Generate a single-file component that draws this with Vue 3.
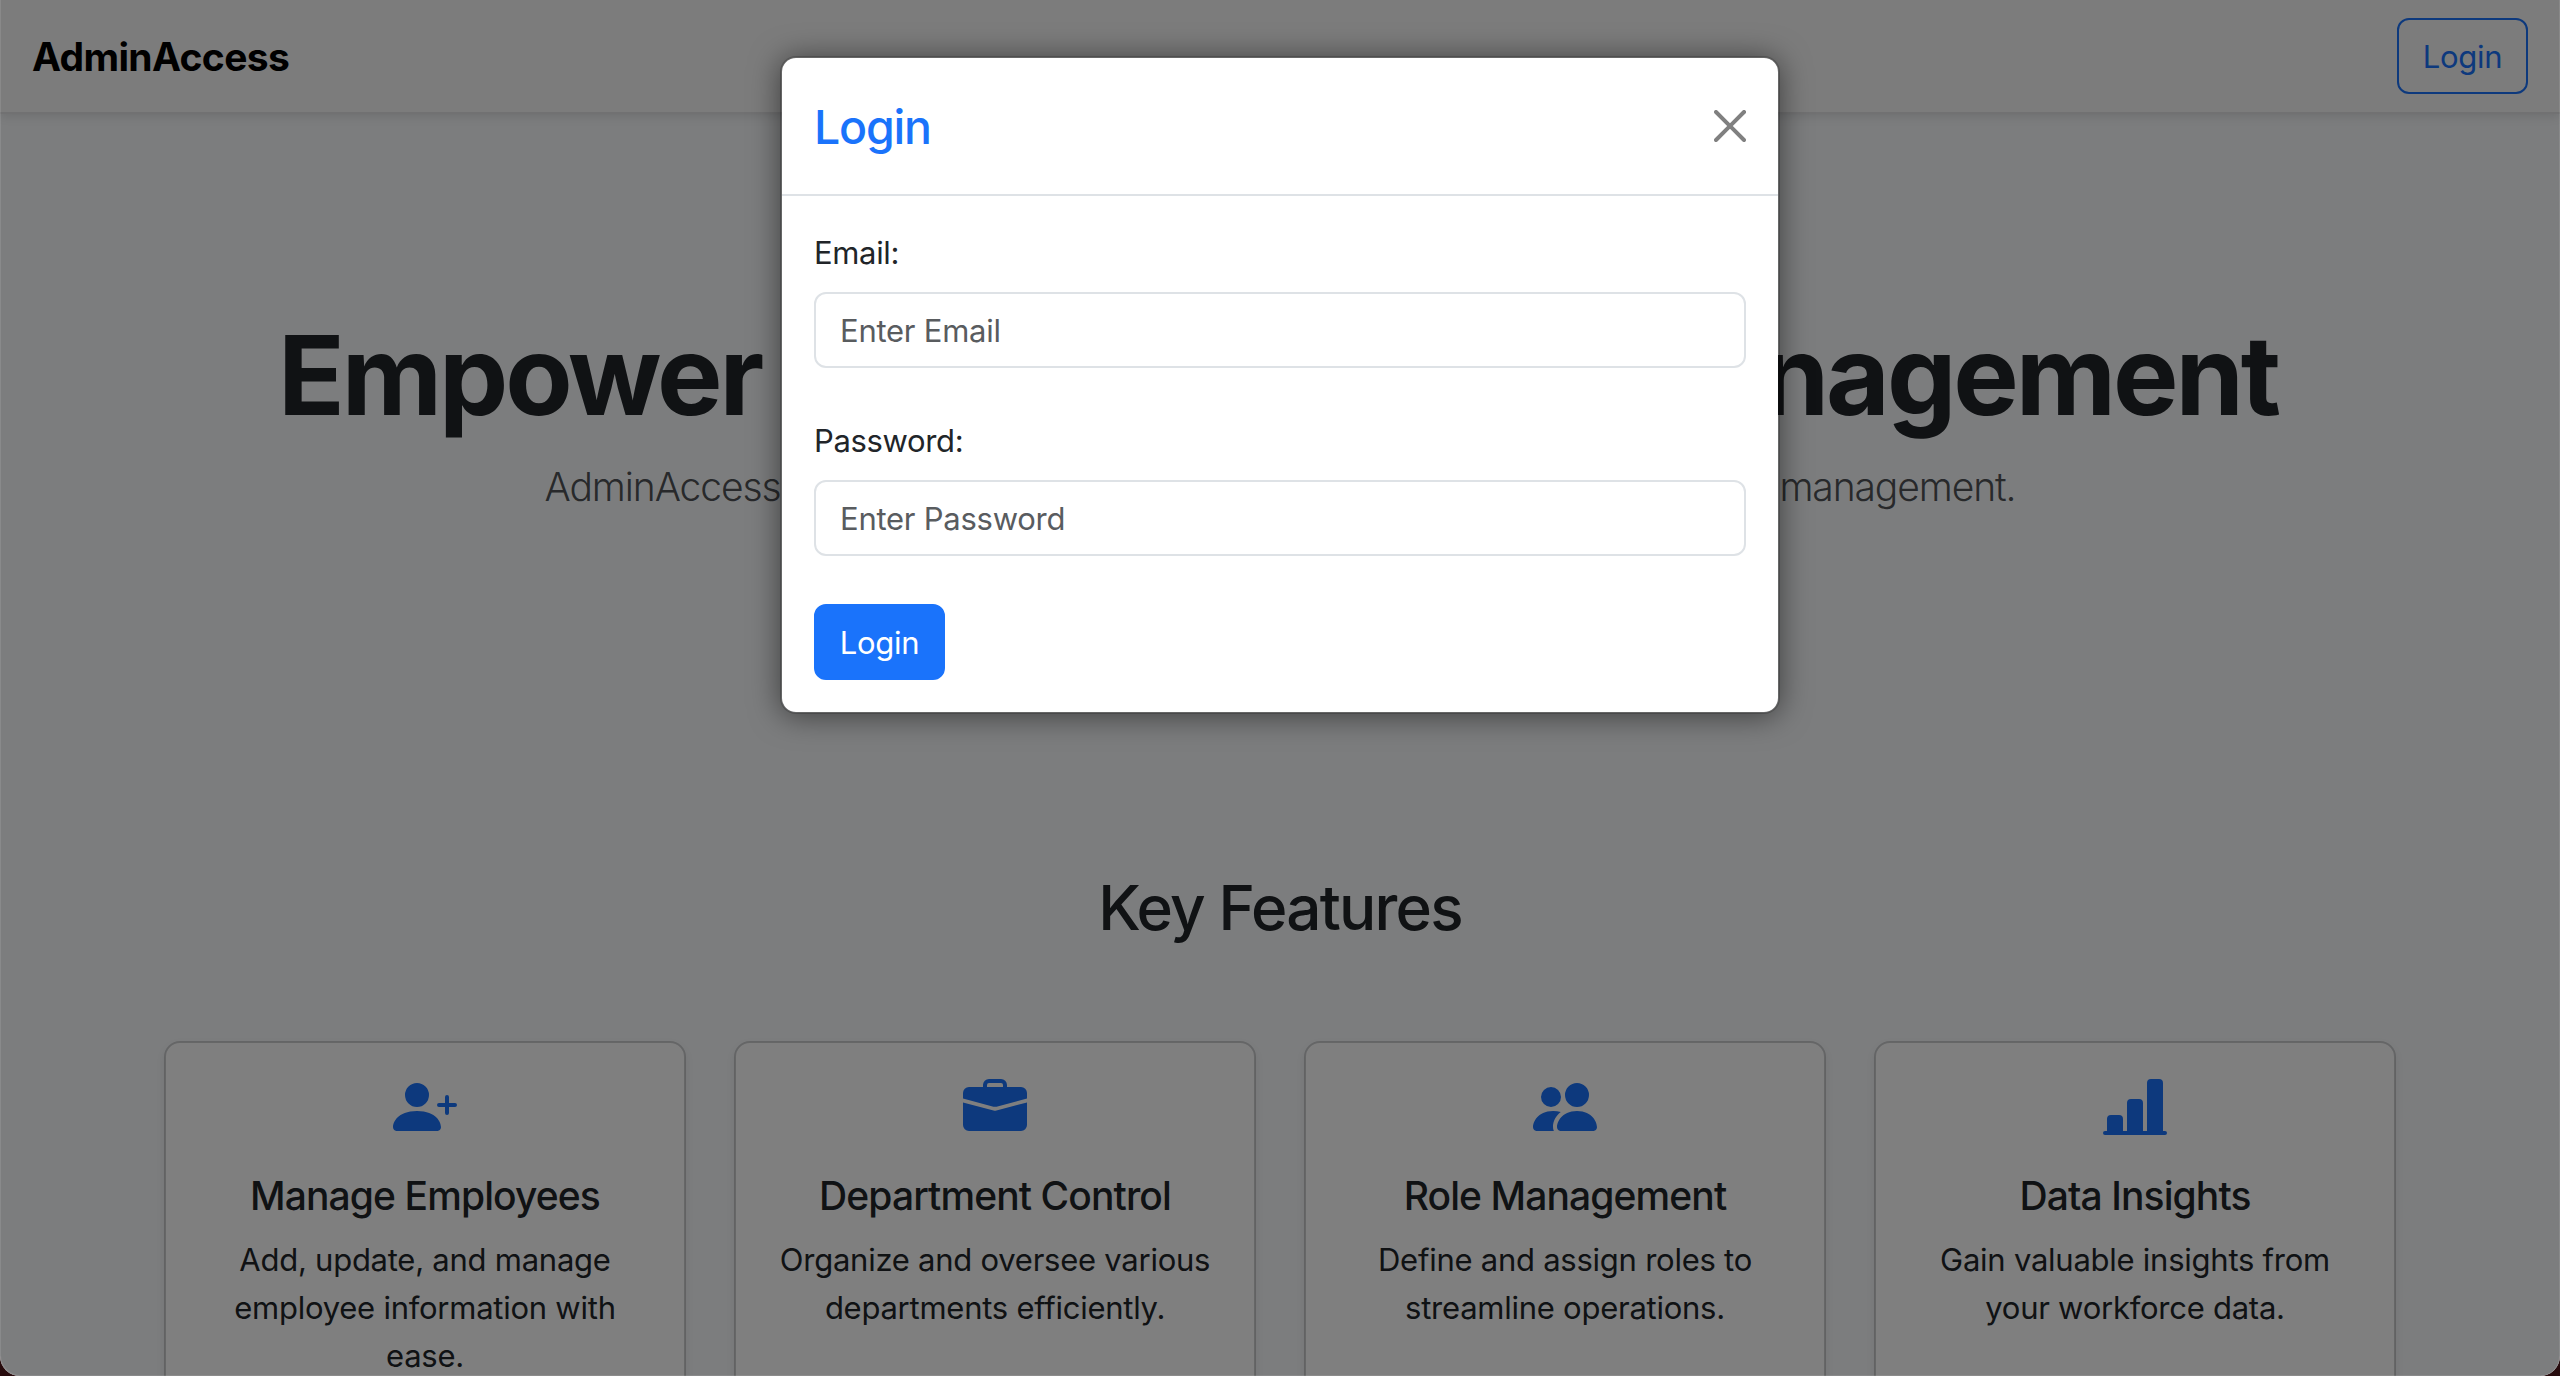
<script setup>
const features = [
  {
    title: 'Manage Employees',
    lines: ['Add, update, and manage', 'employee information with', 'ease.'],
    icon: [
      'M1 14s-1 0-1-1 1-4 6-4 6 3 6 4-1 1-1 1zm5-6a3 3 0 1 0 0-6 3 3 0 0 0 0 6',
      'M13.5 5a.5.5 0 0 1 .5.5V7h1.5a.5.5 0 0 1 0 1H14v1.5a.5.5 0 0 1-1 0V8h-1.5a.5.5 0 0 1 0-1H13V5.5a.5.5 0 0 1 .5-.5',
    ],
  },
  {
    title: 'Department Control',
    lines: ['Organize and oversee various', 'departments efficiently.'],
    icon: [
      'M6.5 1A1.5 1.5 0 0 0 5 2.5V3H1.5A1.5 1.5 0 0 0 0 4.5v1.384l7.614 2.03a1.5 1.5 0 0 0 .772 0L16 5.884V4.5A1.5 1.5 0 0 0 14.5 3H11v-.5A1.5 1.5 0 0 0 9.5 1zm0 1h3a.5.5 0 0 1 .5.5V3H6v-.5a.5.5 0 0 1 .5-.5',
      'M0 12.5A1.5 1.5 0 0 0 1.5 14h13a1.5 1.5 0 0 0 1.5-1.5V6.85L8.129 8.947a.5.5 0 0 1-.258 0L0 6.85z',
    ],
  },
  {
    title: 'Role Management',
    lines: ['Define and assign roles to', 'streamline operations.'],
    icon: [
      'M7 14s-1 0-1-1 1-4 5-4 5 3 5 4-1 1-1 1zm4-6a3 3 0 1 0 0-6 3 3 0 0 0 0 6m-5.784 6A2.24 2.24 0 0 1 5 13c0-1.355.68-2.75 1.936-3.72A6.3 6.3 0 0 0 5 9c-4 0-5 3-5 4s1 1 1 1zM4.5 8a2.5 2.5 0 1 0 0-5 2.5 2.5 0 0 0 0 5',
    ],
  },
  {
    title: 'Data Insights',
    lines: ['Gain valuable insights from', 'your workforce data.'],
    icon: [
      'M11 2a1 1 0 0 1 1-1h2a1 1 0 0 1 1 1v12h.5a.5.5 0 0 1 0 1H.5a.5.5 0 0 1 0-1H1v-3a1 1 0 0 1 1-1h2a1 1 0 0 1 1 1v3h1V7a1 1 0 0 1 1-1h2a1 1 0 0 1 1 1v7h1z',
    ],
  },
]
</script>

<template>
  <div class="desktop">
    <div class="window">
      <header class="navbar">
        <span class="brand">AdminAccess</span>
        <button class="btn btn-outline">Login</button>
      </header>
      <main>
        <section class="hero">
          <h1 class="headline">
            <span>Empower</span><span>Your Team</span><span>Management</span>
          </h1>
          <p class="lead">
            <span>AdminAccess</span><span>is your complete solution for employee</span><span>management.</span>
          </p>
        </section>
        <h2 class="section-title">Key Features</h2>
        <section class="cards">
          <article v-for="f in features" :key="f.title" class="card">
            <svg class="icon" viewBox="0 0 16 16" fill="currentColor">
              <path v-for="d in f.icon" :key="d" :d="d" fill-rule="evenodd" />
            </svg>
            <h3 class="card-title">{{ f.title }}</h3>
            <p class="card-text">
              <span v-for="l in f.lines" :key="l">{{ l }}</span>
            </p>
          </article>
        </section>
      </main>
      <div class="backdrop">
        <div class="modal">
          <div class="modal-header">
            <h4 class="modal-title">Login</h4>
            <svg class="close" viewBox="0 0 16 16">
              <path d="M.293.293a1 1 0 0 1 1.414 0L8 6.586 14.293.293a1 1 0 1 1 1.414 1.414L9.414 8l6.293 6.293a1 1 0 0 1-1.414 1.414L8 9.414l-6.293 6.293a1 1 0 0 1-1.414-1.414L6.586 8 .293 1.707a1 1 0 0 1 0-1.414" />
            </svg>
          </div>
          <form class="modal-body" @submit.prevent>
            <label for="email">Email:</label>
            <input id="email" type="email" placeholder="Enter Email" />
            <label for="password">Password:</label>
            <input id="password" type="password" placeholder="Enter Password" />
            <button class="btn btn-primary">Login</button>
          </form>
        </div>
      </div>
    </div>
  </div>
</template>

<style>
body {
  margin: 0;
  overflow: hidden;
}
</style>

<style scoped>
* {
  box-sizing: border-box;
}
.desktop {
  width: 2560px;
  height: 1376px;
  overflow: hidden;
  background: #270b0d;
  font-family: Inter, "Liberation Sans", sans-serif;
  font-size: 31px;
  line-height: 48px;
  color: #212529;
}
h1, h2, h3, h4, p {
  margin: 0;
}
.window {
  position: relative;
  height: 1376px;
  overflow: hidden;
  background: #f8fafc;
  border-radius: 0 0 20px 20px;
}
.navbar {
  position: relative;
  height: 112px;
  padding: 0 32px;
  display: flex;
  align-items: center;
  justify-content: space-between;
  background: #f8f8f8;
  box-shadow: 0 2px 0 #e2e3e4, 0 4px 10px rgba(0, 0, 0, 0.12);
}
.brand {
  padding-top: 2px;
  font-size: 39px;
  font-weight: 700;
  color: #000;
  letter-spacing: -0.65px;
}
.btn {
  height: 76px;
  width: 131px;
  padding: 2px 0 0;
  border: 2px solid #1a73fb;
  border-radius: 12px;
  font: 400 31px/48px Inter, "Liberation Sans", sans-serif;
  letter-spacing: -0.3px;
  text-align: center;
}
.btn-outline {
  color: #1a73fb;
  background: transparent;
}
.btn-primary {
  color: #fff;
  background: #1a73fb;
}
.hero {
  height: 688px;
  padding-top: 196px;
  display: flex;
  flex-direction: column;
  align-items: center;
}
.headline {
  width: 2000px;
  margin-right: 4px;
  display: flex;
  justify-content: space-between;
  font-size: 110px;
  font-weight: 700;
  line-height: 134px;
  letter-spacing: -3.1px;
  white-space: nowrap;
}
.lead {
  width: 1471px;
  margin-top: 16px;
  display: flex;
  justify-content: space-between;
  font-size: 39px;
  font-weight: 300;
  line-height: 58px;
  letter-spacing: -1.1px;
  color: rgba(33, 37, 41, 0.8);
  white-space: nowrap;
}
.section-title {
  margin-top: 70px;
  font-size: 62px;
  font-weight: 500;
  line-height: 76px;
  letter-spacing: -1.8px;
  text-align: center;
}
.cards {
  margin-top: 95px;
  padding: 0 164px;
  display: grid;
  grid-template-columns: repeat(4, 522px);
  gap: 48px;
}
.card {
  height: 400px;
  padding-top: 32px;
  display: flex;
  flex-direction: column;
  align-items: center;
  background: #fff;
  background-clip: padding-box;
  border: 2px solid rgba(0, 0, 0, 0.175);
  border-radius: 16px;
  box-shadow: 0 4px 8px rgba(0, 0, 0, 0.075);
}
.icon {
  width: 64px;
  height: 64px;
  flex: none;
  color: #1a73fb;
}
.card-title {
  margin-top: 33px;
  font-size: 39px;
  font-weight: 500;
  line-height: 48px;
  letter-spacing: -0.9px;
}
.card-text {
  margin-top: 16px;
  display: flex;
  flex-direction: column;
  align-items: center;
  letter-spacing: -0.25px;
}
.backdrop {
  position: absolute;
  inset: 0;
  padding-top: 56px;
  display: flex;
  align-items: flex-start;
  justify-content: center;
  background: rgba(0, 0, 0, 0.5);
  border-radius: 0 0 20px 20px;
  box-shadow: inset 1px -1px 0 rgba(255, 255, 255, 0.1), inset -1px 0 0 rgba(255, 255, 255, 0.1);
}
.modal {
  width: 1000px;
  background: #fff;
  background-clip: padding-box;
  border: 2px solid rgba(0, 0, 0, 0.175);
  border-radius: 16px;
  box-shadow: 0 2px 30px rgba(0, 0, 0, 0.5);
}
.modal-header {
  height: 138px;
  padding: 0 32px;
  display: flex;
  align-items: center;
  justify-content: space-between;
  border-bottom: 2px solid #dee2e6;
}
.modal-title {
  padding-top: 2px;
  font-size: 46.5px;
  font-weight: 500;
  line-height: 72px;
  letter-spacing: -1.2px;
  color: #1a73fb;
}
.close {
  width: 32px;
  height: 32px;
  fill: #808080;
}
.modal-body {
  padding: 32px;
  display: flex;
  flex-direction: column;
  align-items: flex-start;
}
label {
  padding-top: 1px;
  margin-bottom: 15px;
  letter-spacing: -0.35px;
}
input {
  width: 100%;
  height: 76px;
  margin: 0 0 48px;
  padding: 0 24px;
  border: 2px solid #dee2e6;
  border-radius: 12px;
  outline: none;
  background: #fff;
  font: 400 31px/48px Inter, "Liberation Sans", sans-serif;
  letter-spacing: -0.25px;
}
input::placeholder {
  color: #595c5f;
  opacity: 1;
}
</style>
